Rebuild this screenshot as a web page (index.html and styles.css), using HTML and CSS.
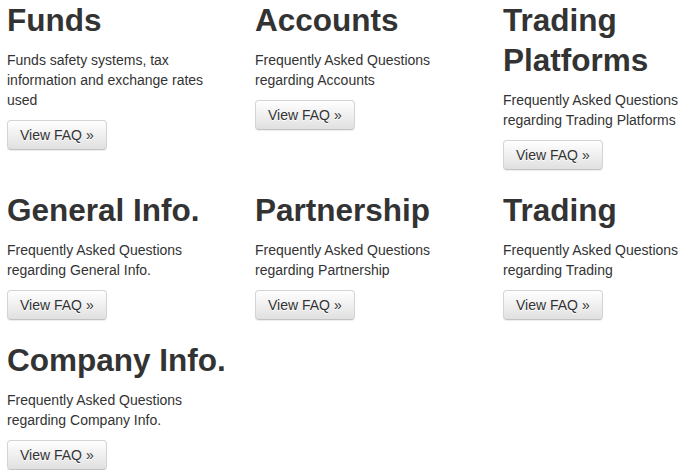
FILE: index.html
```html
<!DOCTYPE html>
<html lang="en">
<head>
<meta charset="utf-8">
<title>FAQ</title>
<link rel="stylesheet" href="styles.css">
</head>
<body>
<div class="faq-grid">
  <div class="faq-item">
    <h2 class="faq-title">Funds</h2>
    <p class="faq-text">Funds safety systems, tax information and exchange rates used</p>
    <a class="btn" href="#">View FAQ &raquo;</a>
  </div>
  <div class="faq-item">
    <h2 class="faq-title">Accounts</h2>
    <p class="faq-text">Frequently Asked Questions regarding Accounts</p>
    <a class="btn" href="#">View FAQ &raquo;</a>
  </div>
  <div class="faq-item">
    <h2 class="faq-title">Trading Platforms</h2>
    <p class="faq-text">Frequently Asked Questions regarding Trading Platforms</p>
    <a class="btn" href="#">View FAQ &raquo;</a>
  </div>
  <div class="faq-item">
    <h2 class="faq-title">General Info.</h2>
    <p class="faq-text">Frequently Asked Questions regarding General Info.</p>
    <a class="btn" href="#">View FAQ &raquo;</a>
  </div>
  <div class="faq-item">
    <h2 class="faq-title">Partnership</h2>
    <p class="faq-text">Frequently Asked Questions regarding Partnership</p>
    <a class="btn" href="#">View FAQ &raquo;</a>
  </div>
  <div class="faq-item">
    <h2 class="faq-title">Trading</h2>
    <p class="faq-text">Frequently Asked Questions regarding Trading</p>
    <a class="btn" href="#">View FAQ &raquo;</a>
  </div>
  <div class="faq-item">
    <h2 class="faq-title">Company Info.</h2>
    <p class="faq-text">Frequently Asked Questions regarding Company Info.</p>
    <a class="btn" href="#">View FAQ &raquo;</a>
  </div>
</div>
</body>
</html>
```
FILE: styles.css
```css
html, body {
  margin: 0;
  padding: 0;
  background: #fff;
}
body {
  font-family: "Liberation Sans", Arial, sans-serif;
  font-size: 14px;
  line-height: 20px;
  color: #333;
}
.faq-grid {
  display: grid;
  grid-template-columns: 224px 224px minmax(0, 1fr);
  column-gap: 24px;
  row-gap: 20px;
  padding-left: 7px;
  align-items: start;
}
.faq-item {
  display: flex;
  flex-direction: column;
  align-items: flex-start;
}
.faq-title {
  margin: 0 0 10px;
  font-size: 31.5px;
  line-height: 40px;
  font-weight: bold;
  color: #333;
}
.faq-text {
  margin: 0 0 10px;
}
.btn {
  display: inline-block;
  box-sizing: border-box;
  height: 30px;
  padding: 4px 12px;
  font-size: 14px;
  line-height: 20px;
  color: #333;
  text-decoration: none;
  text-shadow: 0 1px 0 #fff;
  white-space: nowrap;
  border: 1px solid #d4d4d4;
  border-bottom-color: #c2c2c2;
  border-radius: 4px;
  background-image: linear-gradient(to bottom, #ffffff 0%, #e0e0e0 100%);
  box-shadow: inset 0 1px 0 rgba(255,255,255,.15), 0 1px 1px rgba(0,0,0,.075);
}
```
